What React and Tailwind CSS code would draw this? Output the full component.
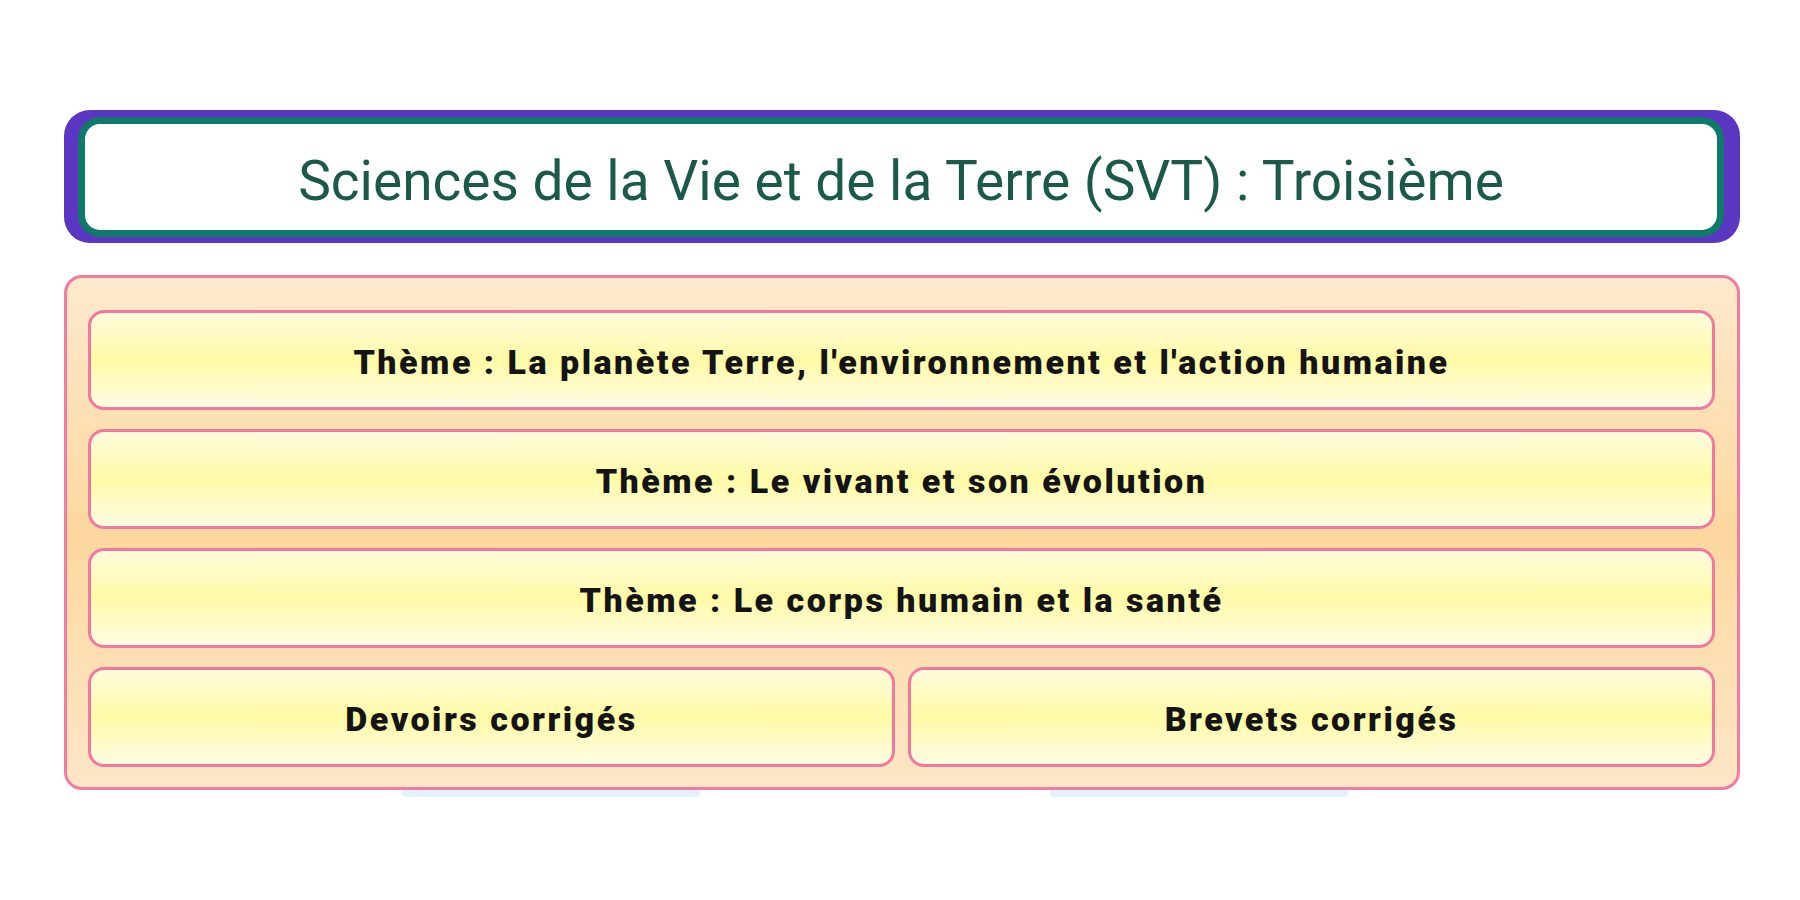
import React from "react";

const themes = [
  "Thème : La planète Terre, l'environnement et l'action humaine",
  "Thème : Le vivant et son évolution",
  "Thème : Le corps humain et la santé",
];

function Tile({ label, className = "" }) {
  return (
    <div
      className={`h-[100px] flex items-center justify-center pt-[4px] rounded-[16px] border-[3px] border-[#f2789f] bg-linear-to-b from-[#fffbdc] via-[#fffaa6] to-[#fffce2] ${className}`}
    >
      <span className="text-[34px] font-black tracking-[2.5px] text-[#141414] leading-none">
        {label}
      </span>
    </div>
  );
}

function App() {
  return (
    <div
      className="w-[1800px] h-[900px] bg-white pt-[110px] pl-[64px]"
      style={{ fontFamily: "Roboto, 'Noto Sans', sans-serif" }}
    >
      <div className="w-[1676px] flex flex-col">
        <div className="bg-[#5a36c2] rounded-[26px] pt-[7px] pl-[14px] pr-[16px] pb-[6px]">
          <div className="h-[120px] bg-white border-[7px] border-[#10796a] rounded-[22px] flex items-center justify-center pt-[8px]">
            <h1 className="text-[55px] text-[#1b5a4b] font-normal leading-none">
              Sciences de la Vie et de la Terre (SVT) : Troisième
            </h1>
          </div>
        </div>

        <div className="mt-[32px] h-[515px] rounded-[18px] border-[3px] border-[#f27ba2] bg-linear-to-b from-[#fde9cc] via-[#fcd89e] to-[#fde6c6] pt-[32px] pl-[21px] pr-[22px] flex flex-col gap-[19px]">
          {themes.map((t) => (
            <Tile key={t} label={t} />
          ))}
          <div className="flex gap-[13px]">
            <Tile label="Devoirs corrigés" className="flex-1" />
            <Tile label="Brevets corrigés" className="flex-1" />
          </div>
        </div>

        <div className="flex pl-[338px] gap-[350px]">
          <div className="w-[298px] h-[7px] bg-[#e2f2fc] rounded-b-[4px]" />
          <div className="w-[298px] h-[7px] bg-[#e2f2fc] rounded-b-[4px]" />
        </div>
      </div>
    </div>
  );
}

export default App;
